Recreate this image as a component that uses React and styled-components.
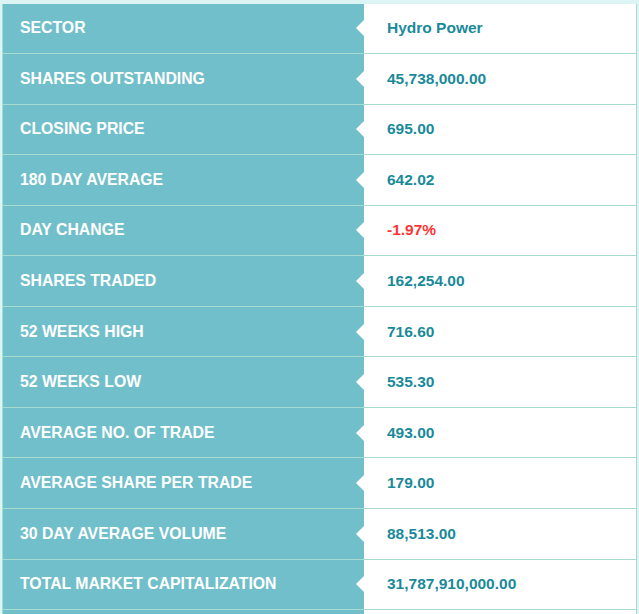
import React from "react";
import styled, { createGlobalStyle } from "styled-components";

const GlobalStyle = createGlobalStyle`
  html, body {
    margin: 0;
    padding: 0;
    background: #dcf4f4;
    overflow: hidden;
  }
  body {
    font-family: "Liberation Sans", Arial, sans-serif;
  }
`;

const Page = styled.div`
  padding: 3.5px 2px 0 2px;
  height: 614px;
  box-sizing: border-box;
  overflow: hidden;
`;

const Table = styled.div`
  display: flex;
  flex-direction: column;
  border-left: 1px solid #a6dccf;
  border-right: 1px solid #a6dccf;
  background: #ffffff;
`;

const Row = styled.div`
  display: grid;
  grid-template-columns: 361px 1fr;
  height: 50.55px;
  box-sizing: border-box;
  border-bottom: 1px solid #a6dccf;
`;

const Label = styled.div`
  position: relative;
  display: flex;
  align-items: center;
  padding-left: 17px;
  background: #71bfca;
  color: #ffffff;
  font-weight: 700;
  font-size: 15.8px;
  white-space: nowrap;

  &::after {
    content: "";
    position: absolute;
    right: 0;
    top: 50%;
    transform: translateY(-50%);
    border-top: 8px solid transparent;
    border-bottom: 8px solid transparent;
    border-right: 8px solid #ffffff;
  }
`;

const Value = styled.div`
  display: flex;
  align-items: center;
  padding-left: 23px;
  font-weight: 700;
  font-size: 15.5px;
  color: ${(p) => (p.$negative ? "#ff3333" : "#1a8a9a")};
`;

const rows = [
  ["SECTOR", "Hydro Power"],
  ["SHARES OUTSTANDING", "45,738,000.00"],
  ["CLOSING PRICE", "695.00"],
  ["180 DAY AVERAGE", "642.02"],
  ["DAY CHANGE", "-1.97%"],
  ["SHARES TRADED", "162,254.00"],
  ["52 WEEKS HIGH", "716.60"],
  ["52 WEEKS LOW", "535.30"],
  ["AVERAGE NO. OF TRADE", "493.00"],
  ["AVERAGE SHARE PER TRADE", "179.00"],
  ["30 DAY AVERAGE VOLUME", "88,513.00"],
  ["TOTAL MARKET CAPITALIZATION", "31,787,910,000.00"],
  ["", ""],
];

export default function App() {
  return (
    <Page>
      <GlobalStyle />
      <Table>
        {rows.map(([label, value], i) => (
          <Row key={i}>
            <Label>{label}</Label>
            <Value $negative={value.startsWith("-")}>{value}</Value>
          </Row>
        ))}
      </Table>
    </Page>
  );
}
